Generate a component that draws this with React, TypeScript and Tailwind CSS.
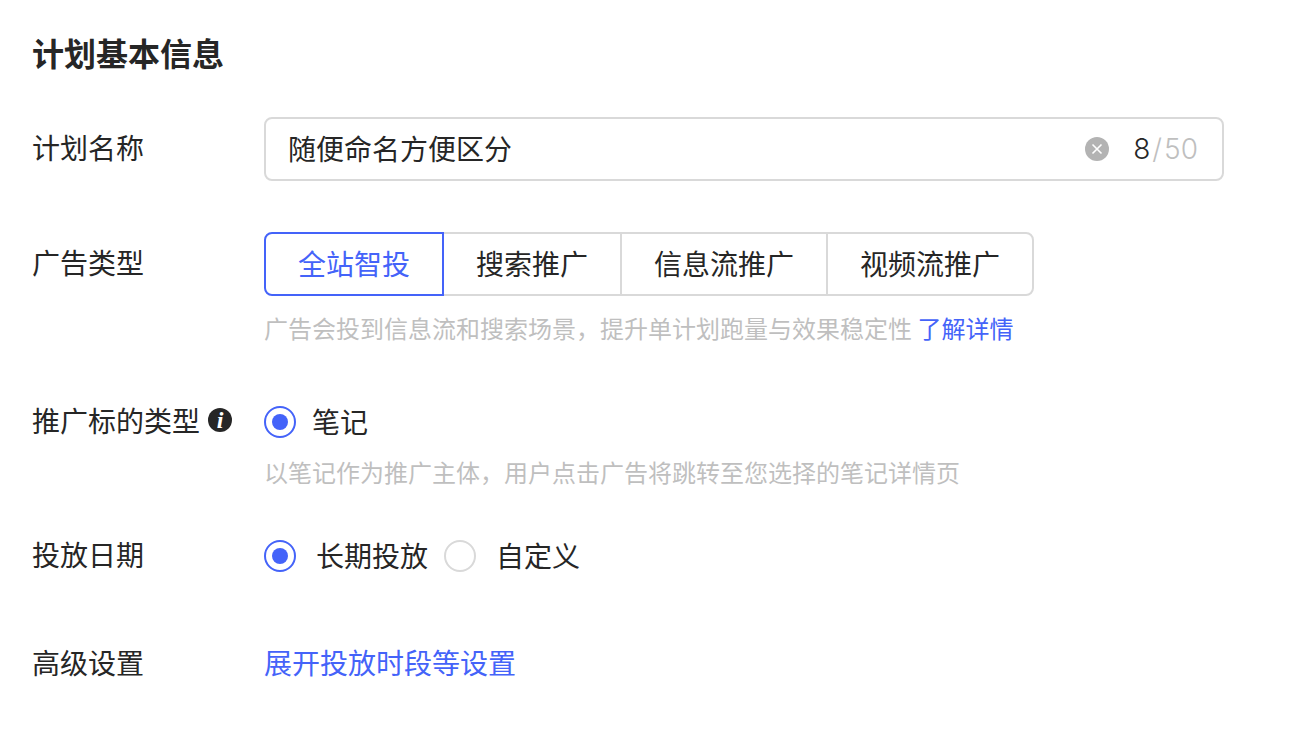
import { useState, type ReactNode } from "react";

const adTypes = ["全站智投", "搜索推广", "信息流推广", "视频流推广"];

const radioClass =
  "relative m-0 size-8 shrink-0 appearance-none rounded-full border-2 border-[#d9d9d9] bg-white checked:border-[#4463f9] checked:before:absolute checked:before:inset-1.5 checked:before:rounded-full checked:before:bg-[#4463f9]";

function Row({ label, className, children }: { label: ReactNode; className: string; children: ReactNode }) {
  return (
    <div className={`flex items-start ${className}`}>
      <div className="flex h-15 w-58 shrink-0 items-center gap-2 whitespace-nowrap">{label}</div>
      <div className="min-w-0 flex-1">{children}</div>
    </div>
  );
}

export default function App() {
  const [name, setName] = useState("随便命名方便区分");
  const [adType, setAdType] = useState("全站智投");
  const [date, setDate] = useState("long");

  return (
    <main className="bg-white p-8 font-['Noto_Sans_CJK_SC',sans-serif] text-[28px] leading-10 text-[#262626]">
      <h1 className="text-[32px] leading-10 font-bold">计划基本信息</h1>

      {/* Plan name */}
      <Row className="mt-[45px]" label={<label htmlFor="plan-name">计划名称</label>}>
        <div className="flex h-16 w-full max-w-240 items-center rounded-lg border-2 border-[#d9d9d9] pr-6 pl-5.5">
          <input
            id="plan-name"
            type="text"
            maxLength={50}
            value={name}
            onChange={(e) => setName(e.target.value)}
            className="min-w-0 flex-1 bg-transparent pb-0.5 outline-none"
          />
          <button type="button" aria-label="清空" onClick={() => setName("")} className="mr-6 size-6 shrink-0">
            <svg viewBox="0 0 24 24" className="size-6" fill="none">
              <circle cx="12" cy="12" r="12" fill="#b3b3b3" />
              <path d="M7.5 7.5l9 9M16.5 7.5l-9 9" stroke="#fff" strokeWidth="1.6" />
            </svg>
          </button>
          <span className="flex gap-0.5 font-['Inter',sans-serif] font-light text-[#bfbfbf]">
            <span className="text-[#262626]">{name.length}</span>
            <span>/</span>
            <span>50</span>
          </span>
        </div>
      </Row>

      {/* Ad type */}
      <Row className="mt-[51px]" label="广告类型">
        <div className="flex">
          {adTypes.map((type) => (
            <button
              key={type}
              type="button"
              aria-pressed={type === adType}
              onClick={() => setAdType(type)}
              className={`-ml-0.5 h-16 border-2 px-8 pb-0.5 whitespace-nowrap first:ml-0 first:rounded-l-lg last:rounded-r-lg ${
                type === adType ? "z-10 border-[#4463f9] text-[#4463f9]" : "border-[#d9d9d9]"
              }`}
            >
              {type}
            </button>
          ))}
        </div>
        <p className="mt-3.5 text-2xl leading-9 text-[#bfbfbf]">
          广告会投到信息流和搜索场景，提升单计划跑量与效果稳定性{" "}
          <a href="#detail" className="text-[#4463f9]">了解详情</a>
        </p>
      </Row>

      {/* Promotion target */}
      <Row
        className="mt-11"
        label={
          <>
            推广标的类型
            <span className="flex size-6 items-center justify-center rounded-full bg-[#262626] font-['Liberation_Serif',serif] text-2xl leading-6 font-bold text-white italic">
              i
            </span>
          </>
        }
      >
        <label className="flex h-16 w-fit items-center gap-4">
          <input type="radio" name="target" defaultChecked className={radioClass} />
          <span className="pb-0.5">笔记</span>
        </label>
        <p className="text-2xl leading-9 text-[#bfbfbf]">
          以笔记作为推广主体，用户点击广告将跳转至您选择的笔记详情页
        </p>
      </Row>

      {/* Date */}
      <Row className="mt-8.5" label="投放日期">
        <div className="flex h-16 items-center gap-4">
          <label className="flex items-center gap-5">
            <input
              type="radio"
              name="date"
              checked={date === "long"}
              onChange={() => setDate("long")}
              className={radioClass}
            />
            <span className="pb-0.5">长期投放</span>
          </label>
          <label className="flex items-center gap-5">
            <input
              type="radio"
              name="date"
              checked={date === "custom"}
              onChange={() => setDate("custom")}
              className={radioClass}
            />
            <span className="pb-0.5">自定义</span>
          </label>
        </div>
      </Row>

      {/* Advanced */}
      <Row className="mt-11" label="高级设置">
        <button type="button" className="h-15 text-[#4463f9]">展开投放时段等设置</button>
      </Row>
    </main>
  );
}
